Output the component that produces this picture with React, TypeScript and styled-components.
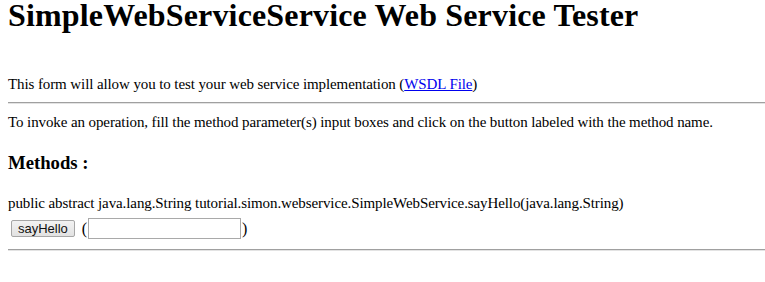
import React from "react";
import styled, { createGlobalStyle } from "styled-components";

const Global = createGlobalStyle`
  html, body { margin: 0; padding: 0; background: #ffffff; }
  body { font-family: "Liberation Serif", "Times New Roman", serif; color: #000; }
`;

const Page = styled.div`
  padding: 0 0 0 8px;
  font-size: 15px;
  letter-spacing: -0.1px;
  line-height: 18px;
`;

const Title = styled.h1`
  margin: 0;
  font-size: 32px;
  line-height: 30px;
  letter-spacing: 0.15px;
  font-weight: bold;
  white-space: nowrap;
`;

const Para = styled.div<{ $top: number }>`
  margin-top: ${(p) => p.$top}px;
  white-space: nowrap;
`;

const Link = styled.a`
  color: #0000ee;
  text-decoration: underline;
`;

const Rule = styled.hr<{ $top: number; $bottom: number }>`
  margin: ${(p) => p.$top}px 0 ${(p) => p.$bottom}px 0;
  height: 0;
  border: none;
  border-top: 1px solid #a0a0a0;
  border-bottom: 1px solid #e3e3e3;
`;

const Heading = styled.h3`
  margin: 21px 0 0 0;
  font-size: 18.72px;
  line-height: 22px;
  letter-spacing: 0;
  font-weight: bold;
`;

const Form = styled.form`
  margin: 20px 0 0 0;
`;

const Row = styled.div`
  display: flex;
  align-items: center;
  margin-top: 6px;
  padding-left: 3px;
`;

const Button = styled.button`
  font-family: "Liberation Sans", Arial, sans-serif;
  font-size: 13px;
  letter-spacing: 0;
  line-height: 15px;
  height: 17px;
  padding: 0 6px;
  background: linear-gradient(#f2f2f2, #e2e2e2);
  border: 1px solid #a6a6a6;
  border-radius: 2px;
  color: #111;
  margin-right: 7px;
`;

const Paren = styled.span`
  font-size: 16px;
`;

const TextInput = styled.input`
  width: 153px;
  height: 21px;
  box-sizing: border-box;
  border: 1px solid #a9a9a9;
  padding: 1px 2px;
  margin: 0 1px;
  font-family: "Liberation Sans", Arial, sans-serif;
  font-size: 13px;
  background: #fff;
`;

export default function App() {
  return (
    <>
      <Global />
      <Page>
        <Title>SimpleWebServiceService Web Service Tester</Title>
        <Para $top={45}>
          This form will allow you to test your web service implementation (
          <Link href="#">WSDL File</Link>)
        </Para>
        <Rule $top={9} $bottom={9} />
        <Para $top={0}>
          To invoke an operation, fill the method parameter(s) input boxes and click on the button labeled with the method name.
        </Para>
        <Heading>Methods :</Heading>
        <Form onSubmit={(e) => e.preventDefault()}>
          <Para $top={0}>
            public abstract java.lang.String tutorial.simon.webservice.SimpleWebService.sayHello(java.lang.String)
          </Para>
          <Row>
            <Button type="submit">sayHello</Button>
            <Paren>(</Paren>
            <TextInput type="text" />
            <Paren>)</Paren>
          </Row>
        </Form>
        <Rule $top={10} $bottom={0} />
      </Page>
    </>
  );
}
